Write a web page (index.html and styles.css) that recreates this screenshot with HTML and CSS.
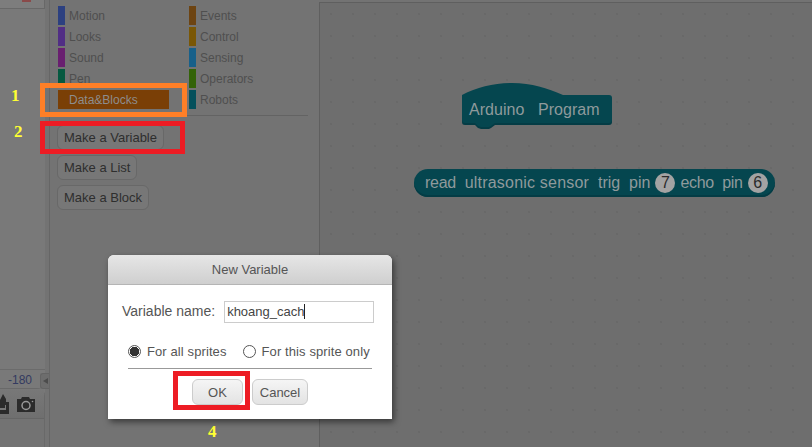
FILE: index.html
```html
<!DOCTYPE html>
<html lang="en">
<head>
  <meta charset="UTF-8">
  <meta name="viewport" content="width=device-width, initial-scale=1.0">
  <title>New Variable</title>
  <link rel="stylesheet" href="styles.css">
</head>
<body>
  <div class="app">
    <div class="stage-side">
      <div class="stage-top"><span class="stop-mark"></span></div>
      <div class="stage-space"></div>
      <div class="coords">-180</div>
      <div class="sprites">
        <div class="sprites-bar">
          <svg width="9" height="20" viewBox="0 0 9 20"><path d="M0 6l3-6 3 5v3h3v12H0z" fill="#2b2b2b"/><path d="M0 14h5v-3h1v5H0z" fill="#777"/></svg>
          <svg width="20" height="16" viewBox="0 0 20 16"><path d="M1 3h4l1-2h7l1 2h5v13H1z" fill="#2b2b2b"/><circle cx="10" cy="9.500" r="4" fill="none" stroke="#999" stroke-width="1.500"/><circle cx="16.500" cy="5.500" r="0.800" fill="#999"/></svg>
        </div>
      </div>
    </div>
    <div class="collapse-tab"><span class="tri"></span></div>

    <div class="palette">
      <div class="categories">
        <div class="cat"><i class="c-motion"></i>Motion</div>
        <div class="cat"><i class="c-events"></i>Events</div>
        <div class="cat"><i class="c-looks"></i>Looks</div>
        <div class="cat"><i class="c-control"></i>Control</div>
        <div class="cat"><i class="c-sound"></i>Sound</div>
        <div class="cat"><i class="c-sensing"></i>Sensing</div>
        <div class="cat"><i class="c-pen"></i>Pen</div>
        <div class="cat"><i class="c-operators"></i>Operators</div>
        <div class="cat active">Data&amp;Blocks</div>
        <div class="cat"><i class="c-robots"></i>Robots</div>
      </div>
      <div class="divider"></div>
      <div class="make-list">
        <button class="make-btn">Make a Variable</button>
        <button class="make-btn">Make a List</button>
        <button class="make-btn">Make a Block</button>
      </div>
    </div>

    <div class="scripts">
      <div class="block hat-block">
        <svg class="hat-shape" width="150" height="47" viewBox="0 0 150 47"><path d="M0 14C15 6 32 2 50 2c20 0 35 5 51 12h46q3 0 3 3v22q0 3-3 3H33l-4 3-2 1h-8l-3-1-3-3H3q-3 0-3-3z" fill="#043c45"/><path d="M0 12C15 4 32 0 50 0c20 0 35 5 51 12h46q3 0 3 3v22q0 3-3 3H33l-4 3-2 1h-8l-3-1-3-3H3q-3 0-3-3z" fill="#05464f"/></svg>
        <span class="hat-text">Arduino&nbsp;&nbsp;&nbsp;Program</span>
      </div>
      <div class="block reporter">
        <span><span class="tight">read</span>&nbsp; <span class="wide">ultrasonic sensor</span>&nbsp; trig&nbsp; pin</span>
        <span class="num">7</span>
        <span class="tight">echo&nbsp; pin</span>
        <span class="num">6</span>
      </div>
    </div>
  </div>

  <span class="note note-1">1</span>
  <span class="note note-2">2</span>
  <span class="note note-3">3</span>
  <span class="note note-4">4</span>
  <div class="mark mark-data"></div>
  <div class="mark mark-make"></div>

  <div class="dialog">
    <div class="dialog-title">New Variable</div>
    <div class="dialog-body">
      <div class="name-row">
        <label class="name-label" for="varname">Variable name:</label>
        <div class="name-input" id="varname">khoang_cach<span class="caret"></span></div>
      </div>
      <div class="radios">
        <div class="radio"><span class="dot on"></span>For all sprites</div>
        <div class="radio"><span class="dot"></span>For this sprite only</div>
      </div>
      <div class="dialog-line"></div>
      <div class="dialog-btns">
        <div class="ok-mark"><button class="dlg-btn ok">OK</button></div>
        <button class="dlg-btn cancel">Cancel</button>
      </div>
    </div>
  </div>
</body>
</html>
```

FILE: styles.css
```css
* { box-sizing: border-box; }
html, body { margin: 0; height: 100%; overflow: hidden; }
body { font-family: "Liberation Sans", Arial, sans-serif; background: #737373; position: relative; }
button { font-family: inherit; }

.app { display: flex; height: 447px; }

/* left stage strip */
.stage-side { width: 45px; display: flex; flex-direction: column; flex: none; background: #797979; }
.stage-top { height: 9px; background: #7d7d7d; border-bottom: 1px solid #686868; border-right: 1px solid #686868; position: relative; }
.stop-mark { position: absolute; left: 22px; top: 0; width: 9px; height: 2px; background: #8a4a4a; }
.stage-space { height: 361px; border-bottom: 1px solid #6b6b6b; }
.coords { height: 18px; padding-left: 8px; color: #333a60; font-size: 12px; line-height: 21px; white-space: nowrap; }
.sprites { flex: 1; background: #737373; border-top: 1px solid #696969; border-right: 1px solid #696969; border-radius: 0 8px 0 0; }
.sprites-bar { height: 30px; border-bottom: 1px solid #666; display: flex; align-items: center; gap: 7px; background: linear-gradient(#787878, #6f6f6f); }
.collapse-tab { width: 9px; height: 16px; margin: 373px 0 0 -5px; background: #6d6d6d; border: 1px solid #646464; border-right: 0; border-radius: 3px 0 0 3px; display: flex; align-items: center; justify-content: center; flex: none; position: relative; }
.tri { border: 3px solid transparent; border-right: 5px solid #4c4c4c; border-left: 0; }

/* palette */
.palette { width: 270px; flex: none; background: #737373; border-left: 1px solid #666; padding-top: 6px; }
.categories { display: grid; grid-template-columns: 131px 1fr; grid-auto-rows: 21px; margin-left: 8px; }
.cat { display: flex; align-items: center; font-size: 12px; color: #4f4f4f; height: 19px; }
.cat i { width: 7px; height: 19px; margin-right: 4px; flex: none; }
.cat.active { width: 111px; background: #7a3f06; color: #8d8d8d; padding-left: 11px; }
.c-motion { background: #2c4080; }
.c-looks { background: #512e85; }
.c-sound { background: #691f70; }
.c-pen { background: #055940; }
.c-events { background: #6d4412; }
.c-control { background: #7a5705; }
.c-sensing { background: #17608a; }
.c-operators { background: #336308; }
.c-robots { background: #04505c; }
.divider { height: 1px; background: #636363; margin: 4px 0 0 125px; width: 133px; }
.make-list { display: flex; flex-direction: column; gap: 5px; align-items: flex-start; margin-left: 7px; margin-top: 9px; }
.make-btn { height: 25px; padding: 0 6px; font-size: 13px; color: #2e2e2e; background: #777; border: 1px solid #686868; border-radius: 6px; }

/* scripts */
.scripts { flex: 1; position: relative; margin-top: 2px; background: #6e6e6e; background-image: radial-gradient(#686868 0.7px, transparent 1px); background-size: 22px 22px; border-left: 1px solid #5f5f5f; border-top: 1px solid #5f5f5f; }
.block { position: absolute; color: #8f9a9c; font-size: 16px; }
.hat-block { left: 142px; top: 80px; width: 150px; height: 47px; }
.hat-shape { display: block; }
.hat-text { position: absolute; left: 7px; top: 18px; white-space: nowrap; letter-spacing: 0.05px; }
.reporter { left: 94px; top: 166px; width: 361px; height: 28px; background: #05464f; border-radius: 14px; box-shadow: inset 0 -2px 0 #043c45; display: flex; align-items: center; gap: 5px; padding-left: 11px; white-space: nowrap; }
.tight { letter-spacing: -0.3px; }
.wide { letter-spacing: 0.2px; }
.num { width: 20px; height: 20px; border-radius: 50%; background: #a3a3a3; color: #2b2b2b; display: flex; align-items: center; justify-content: center; }

/* annotations over the screenshot */
.note { position: absolute; font-family: "Liberation Serif", serif; font-weight: bold; font-size: 17px; color: #ffff33; line-height: 18px; }
.note-1 { left: 11px; top: 87px; }
.note-2 { left: 14px; top: 123px; }
.note-3 { left: 306px; top: 275px; color: #ed1c24; }
.note-4 { left: 208px; top: 423px; }
.mark { position: absolute; border: 5px solid #ed1c24; }
.mark-data { left: 40px; top: 83px; width: 147px; height: 34px; border-color: #ff7f27; }
.mark-make { left: 40px; top: 121px; width: 145px; height: 33px; }

/* dialog */
.dialog { position: absolute; left: 108px; top: 255px; width: 284px; height: 164px; background: #fff; border-radius: 6px 6px 0 0; box-shadow: 2px 3px 6px rgba(0,0,0,0.5); }
.dialog-title { height: 30px; background: linear-gradient(#e6e6e6, #cfcfcf); border-bottom: 1px solid #b5b5b5; border-radius: 6px 6px 0 0; text-align: center; font-size: 13px; line-height: 30px; color: #555; }
.dialog-body { padding: 16px 10px 0 14px; }
.name-row { display: flex; align-items: center; gap: 9px; color: #555; }
.name-label { font-size: 14px; margin-top: -3px; white-space: nowrap; flex: none; }
.name-input { width: 150px; height: 22px; flex: none; border: 1px solid #ccc; padding-left: 2px; font-size: 13px; line-height: 20px; color: #444; }
.caret { display: inline-block; width: 1px; height: 15px; background: #222; vertical-align: -3px; }
.radios { display: flex; gap: 16px; margin-top: 21px; margin-left: 6px; font-size: 13px; letter-spacing: 0.1px; color: #555; white-space: nowrap; }
.radio { display: flex; align-items: center; gap: 6px; }
.dot { width: 13px; height: 13px; border: 1px solid #555; border-radius: 50%; background: #fff; display: block; }
.dot.on { background: radial-gradient(#333 0 4.500px, #fff 5px); }
.dialog-line { height: 1px; background: #999; margin: 9px 0 0 6px; width: 244px; }
.dialog-btns { display: flex; align-items: flex-start; gap: 2px; margin: 2px 0 0 51px; }
.ok-mark { border: 5px solid #ed1c24; padding: 3px 0 0 14px; width: 77px; height: 39px; flex: none; }
.dlg-btn { height: 26px; padding: 0; font-size: 13px; color: #555; background: linear-gradient(#f5f5f5, #e3e3e3); border: 1px solid #ccc; border-radius: 6px; }
.dlg-btn.ok { width: 51px; display: block; }
.dlg-btn.cancel { width: 56px; margin-top: 8px; }
```
